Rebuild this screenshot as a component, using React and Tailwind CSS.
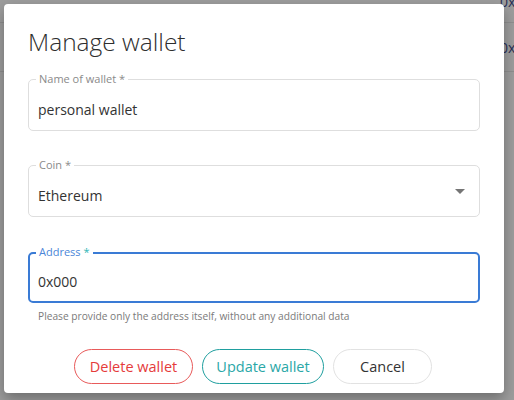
import React from "react";

function Field({ label, children, focused, className = "" }) {
  return (
    <div
      className={
        "relative rounded-[5px] bg-white " +
        (focused ? "border-2 border-[#3a7bd5] " : "border border-[#dedede] ") +
        className
      }
    >
      {label}
      {children}
    </div>
  );
}

export default function App() {
  return (
    <div className="relative h-[400px] w-[514px] overflow-hidden bg-[#9d9d9d] font-['Open_Sans',sans-serif]">
      <div className="flex flex-col">
        <div className="relative h-[23px] border-b border-[#8e8e8e]">
          <span className="absolute left-[500px] top-[-9px] text-[14px] text-[#2a2f55]">0x</span>
        </div>
        <div className="flex h-[49px] items-center border-b border-[#8e8e8e] pl-[500px] text-[14px] text-[#2a2f55]">
          0x
        </div>
      </div>

      <div className="absolute left-[4px] top-[4px] flex h-[389px] w-[500px] flex-col rounded-[4px] bg-white px-[24px] pt-[22px] shadow-[0_6px_14px_rgba(0,0,0,0.3)]">
        <h1 className="h-[32px] text-[24.5px] font-light leading-[32px] text-[#2e2e2e]">Manage wallet</h1>

        <Field
          className="mt-[21px] h-[52px]"
          label={
            <span className="absolute left-[7px] top-[-8px] bg-white px-[3px] text-[11px] leading-[14px] text-[#8a8a8a]">
              Name of wallet *
            </span>
          }
        >
          <div className="flex h-full items-center pl-[9px] pt-[8px] text-[14px] text-[#333]">personal wallet</div>
        </Field>

        <Field
          className="mt-[34px] h-[52px]"
          label={
            <span className="absolute left-[7px] top-[-8px] bg-white px-[3px] text-[11px] leading-[14px] text-[#8a8a8a]">
              Coin *
            </span>
          }
        >
          <div className="flex h-full items-center justify-between pl-[9px] pr-[14px] pt-[8px] text-[14px] text-[#333]">
            <span>Ethereum</span>
            <svg width="10" height="5" viewBox="0 0 10 5" className="mb-[8px]">
              <path d="M0 0 L10 0 L5 5 Z" fill="#757575" />
            </svg>
          </div>
        </Field>

        <Field
          focused
          className="mt-[35px] h-[51px]"
          label={
            <span className="absolute left-[6px] top-[-9px] bg-white px-[3px] text-[11px] leading-[14px] text-[#4a86d8]">
              Address <span className="text-[#2fb7b7]">*</span>
            </span>
          }
        >
          <div className="flex h-full items-center pl-[8px] pt-[7px] text-[14px] text-[#333]">0x000</div>
        </Field>

        <p className="mt-[6px] pl-[10px] text-[10.2px] leading-[14px] text-[#7a7a7a]">
          Please provide only the address itself, without any additional data
        </p>

        <div className="mt-[26px] flex justify-center gap-[9px] pr-[2px]">
          <button className="h-[35px] w-[119px] rounded-full border border-[#e85a5a] text-[14.5px] text-[#e53b3b]">
            Delete wallet
          </button>
          <button className="h-[35px] w-[122px] rounded-full border border-[#1f9f9f] text-[14.5px] text-[#2aa7a7]">
            Update wallet
          </button>
          <button className="h-[35px] w-[99px] rounded-full border border-[#e2e2e2] text-[14.5px] text-[#333]">
            Cancel
          </button>
        </div>
      </div>
    </div>
  );
}
